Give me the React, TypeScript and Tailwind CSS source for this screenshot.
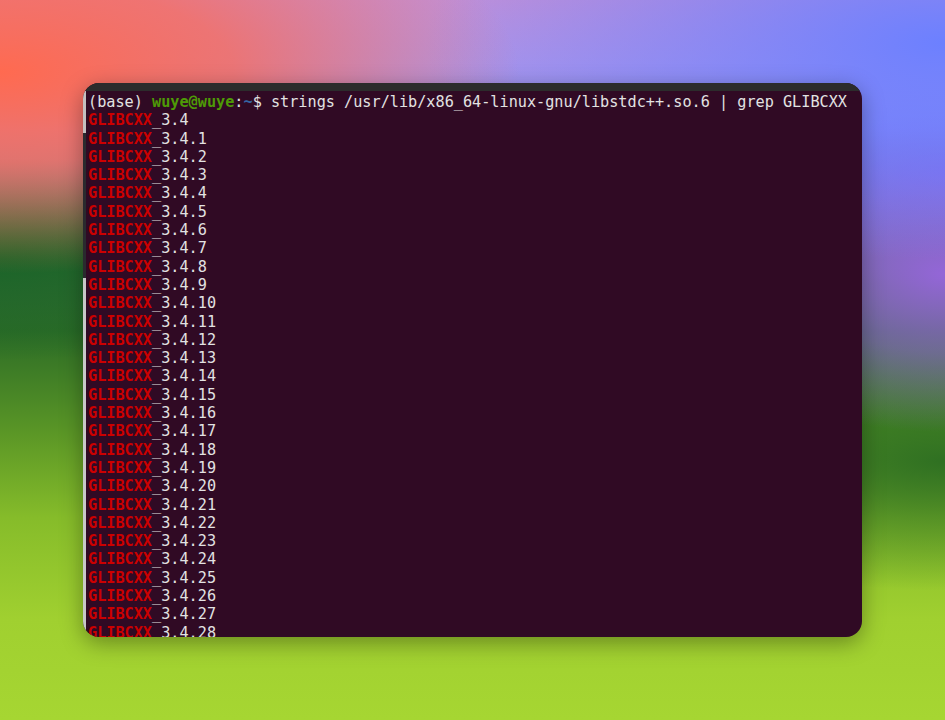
import React from "react";

const versions = ["3.4", ...Array.from({ length: 28 }, (_, i) => `3.4.${i + 1}`)];

const App: React.FC = () => {
  return (
    <div className="w-full h-[720px] flex items-center justify-center overflow-hidden bg-[radial-gradient(55%_28%_at_0%_10%,#ff6a50_0%,rgba(255,106,80,0.75)_45%,rgba(255,106,80,0)_100%),radial-gradient(55%_30%_at_100%_6%,#6c80ff_0%,rgba(108,128,255,0)_100%),radial-gradient(30%_22%_at_100%_38%,#9466d8_0%,rgba(148,102,216,0.6)_50%,rgba(148,102,216,0)_100%),radial-gradient(30%_16%_at_100%_24%,#7474f4_0%,rgba(116,116,244,0)_100%),radial-gradient(40%_14%_at_0%_36%,#1a6428_0%,rgba(26,100,40,0)_100%),radial-gradient(40%_18%_at_100%_64%,#2f7022_0%,rgba(47,112,34,0)_100%),linear-gradient(180deg,#c090d8_0%,#9a9af8_18%,#3a6e38_36%,#2c6c26_46%,#5a9626_60%,#86bc2a_72%,#a0d030_86%,#a6d632_100%)]">
      {/* Terminal window */}
      <div className="w-[779px] h-[554px] rounded-[16px] overflow-hidden flex flex-col bg-[#300a24] shadow-[0_6px_22px_rgba(0,0,0,0.35)]">
        <div className="h-[8px] bg-[#2c2c2c] shrink-0" />
        <div className="flex flex-1 min-h-0">
          {/* sliver of window behind */}
          <div className="w-[3px] flex flex-col shrink-0">
            <div className="h-[42px] bg-[#c4c0c0]" />
            <div className="h-[145px] bg-[#2a2a2e]" />
            <div className="flex-1 bg-[#c8c8c8]" />
          </div>
          <div className="flex-1 pl-[2px] pt-[2px] overflow-hidden font-['DejaVu_Sans_Mono',monospace] text-[15.2px] leading-[18.3px] text-[#e2e2e2] whitespace-pre">
            <div>
              (base) <span className="font-bold text-[#4e9a06]">wuye@wuye</span>:
              <span className="font-bold text-[#3465a4]">~</span>$ strings /usr/lib/x86_64-linux-gnu/libstdc++.so.6 | grep GLIBCXX
            </div>
            {versions.map((v) => (
              <div key={v}>
                <span className="font-bold text-[#cc0000]">GLIBCXX</span>_{v}
              </div>
            ))}
          </div>
        </div>
      </div>
    </div>
  );
};

export default App;
